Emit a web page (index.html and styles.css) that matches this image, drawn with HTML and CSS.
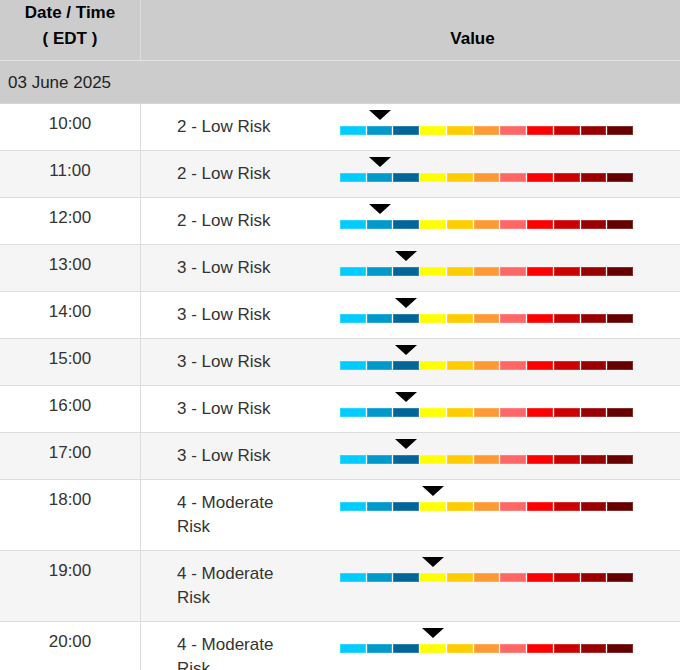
FILE: index.html
```html
<!DOCTYPE html>
<html>
<head>
<meta charset="utf-8">
<link rel="stylesheet" href="styles.css">
</head>
<body>
<div class="table">
  <div class="head">
    <div class="th th-time">Date / Time<br>( EDT )</div>
    <div class="th th-value">Value</div>
  </div>
  <div class="date-row">03 June 2025</div>

  <div class="row">
    <div class="time">10:00</div>
    <div class="value"><div class="risk">2 - Low Risk</div>
      <div class="meter"><div class="pointer" style="margin-left:29px"></div><div class="bar"><span class="s1"></span><span class="s2"></span><span class="s3"></span><span class="s4"></span><span class="s5"></span><span class="s6"></span><span class="s7"></span><span class="s8"></span><span class="s9"></span><span class="s10"></span><span class="s11"></span></div></div></div>
  </div>
  <div class="row">
    <div class="time">11:00</div>
    <div class="value"><div class="risk">2 - Low Risk</div>
      <div class="meter"><div class="pointer" style="margin-left:29px"></div><div class="bar"><span class="s1"></span><span class="s2"></span><span class="s3"></span><span class="s4"></span><span class="s5"></span><span class="s6"></span><span class="s7"></span><span class="s8"></span><span class="s9"></span><span class="s10"></span><span class="s11"></span></div></div></div>
  </div>
  <div class="row">
    <div class="time">12:00</div>
    <div class="value"><div class="risk">2 - Low Risk</div>
      <div class="meter"><div class="pointer" style="margin-left:29px"></div><div class="bar"><span class="s1"></span><span class="s2"></span><span class="s3"></span><span class="s4"></span><span class="s5"></span><span class="s6"></span><span class="s7"></span><span class="s8"></span><span class="s9"></span><span class="s10"></span><span class="s11"></span></div></div></div>
  </div>
  <div class="row">
    <div class="time">13:00</div>
    <div class="value"><div class="risk">3 - Low Risk</div>
      <div class="meter"><div class="pointer" style="margin-left:55px"></div><div class="bar"><span class="s1"></span><span class="s2"></span><span class="s3"></span><span class="s4"></span><span class="s5"></span><span class="s6"></span><span class="s7"></span><span class="s8"></span><span class="s9"></span><span class="s10"></span><span class="s11"></span></div></div></div>
  </div>
  <div class="row">
    <div class="time">14:00</div>
    <div class="value"><div class="risk">3 - Low Risk</div>
      <div class="meter"><div class="pointer" style="margin-left:55px"></div><div class="bar"><span class="s1"></span><span class="s2"></span><span class="s3"></span><span class="s4"></span><span class="s5"></span><span class="s6"></span><span class="s7"></span><span class="s8"></span><span class="s9"></span><span class="s10"></span><span class="s11"></span></div></div></div>
  </div>
  <div class="row">
    <div class="time">15:00</div>
    <div class="value"><div class="risk">3 - Low Risk</div>
      <div class="meter"><div class="pointer" style="margin-left:55px"></div><div class="bar"><span class="s1"></span><span class="s2"></span><span class="s3"></span><span class="s4"></span><span class="s5"></span><span class="s6"></span><span class="s7"></span><span class="s8"></span><span class="s9"></span><span class="s10"></span><span class="s11"></span></div></div></div>
  </div>
  <div class="row">
    <div class="time">16:00</div>
    <div class="value"><div class="risk">3 - Low Risk</div>
      <div class="meter"><div class="pointer" style="margin-left:55px"></div><div class="bar"><span class="s1"></span><span class="s2"></span><span class="s3"></span><span class="s4"></span><span class="s5"></span><span class="s6"></span><span class="s7"></span><span class="s8"></span><span class="s9"></span><span class="s10"></span><span class="s11"></span></div></div></div>
  </div>
  <div class="row">
    <div class="time">17:00</div>
    <div class="value"><div class="risk">3 - Low Risk</div>
      <div class="meter"><div class="pointer" style="margin-left:55px"></div><div class="bar"><span class="s1"></span><span class="s2"></span><span class="s3"></span><span class="s4"></span><span class="s5"></span><span class="s6"></span><span class="s7"></span><span class="s8"></span><span class="s9"></span><span class="s10"></span><span class="s11"></span></div></div></div>
  </div>
  <div class="row">
    <div class="time">18:00</div>
    <div class="value"><div class="risk">4 - Moderate Risk</div>
      <div class="meter"><div class="pointer" style="margin-left:82px"></div><div class="bar"><span class="s1"></span><span class="s2"></span><span class="s3"></span><span class="s4"></span><span class="s5"></span><span class="s6"></span><span class="s7"></span><span class="s8"></span><span class="s9"></span><span class="s10"></span><span class="s11"></span></div></div></div>
  </div>
  <div class="row">
    <div class="time">19:00</div>
    <div class="value"><div class="risk">4 - Moderate Risk</div>
      <div class="meter"><div class="pointer" style="margin-left:82px"></div><div class="bar"><span class="s1"></span><span class="s2"></span><span class="s3"></span><span class="s4"></span><span class="s5"></span><span class="s6"></span><span class="s7"></span><span class="s8"></span><span class="s9"></span><span class="s10"></span><span class="s11"></span></div></div></div>
  </div>
  <div class="row">
    <div class="time">20:00</div>
    <div class="value"><div class="risk">4 - Moderate Risk</div>
      <div class="meter"><div class="pointer" style="margin-left:82px"></div><div class="bar"><span class="s1"></span><span class="s2"></span><span class="s3"></span><span class="s4"></span><span class="s5"></span><span class="s6"></span><span class="s7"></span><span class="s8"></span><span class="s9"></span><span class="s10"></span><span class="s11"></span></div></div></div>
  </div>
</div>
</body>
</html>
```

FILE: styles.css
```css
html, body {
  margin: 0;
  padding: 0;
  background: #fff;
  overflow: hidden;
}
body {
  font-family: "Liberation Sans", Arial, sans-serif;
  font-size: 17px;
  color: #333;
}
.table {
  width: 680px;
}
.head {
  display: grid;
  grid-template-columns: 141px 1fr;
  background: #cccccc;
  border-bottom: 1px solid #e4e4e4;
  height: 60px;
}
.th {
  font-weight: bold;
  color: #000;
  line-height: 26px;
  text-align: center;
  align-self: end;
  padding-bottom: 8px;
}
.th-time {
  border-right: 1px solid #dedede;
  align-self: stretch;
  display: flex;
  flex-direction: column;
  justify-content: flex-end;
}
.th-value {
  padding-left: 124px;
}
.date-row {
  background: #cccccc;
  color: #222;
  height: 42px;
  line-height: 43px;
  padding-left: 8px;
  border-bottom: 1px solid #d6d6d6;
}
.row {
  display: grid;
  grid-template-columns: 141px 1fr;
  border-bottom: 1px solid #dddddd;
  background: #fff;
}
.row:nth-of-type(even) {
  background: #f5f5f5;
}
.time {
  border-right: 1px solid #dddddd;
  text-align: center;
  line-height: 24px;
  padding-top: 8px;
}
.value {
  display: grid;
  grid-template-columns: 120px 293px;
  column-gap: 43px;
  padding-left: 36px;
  align-items: start;
}
.risk {
  line-height: 24px;
  padding: 11px 0 11px;
}
.meter {
  padding-top: 6px;
}
.pointer {
  width: 0;
  height: 0;
  border-left: 11px solid transparent;
  border-right: 11px solid transparent;
  border-top: 10px solid #000;
  margin-bottom: 6px;
}
.bar {
  display: flex;
  gap: 1px;
  height: 9px;
}
.bar span {
  flex: 1;
  box-shadow: inset 0 0 0 1px rgba(255, 255, 255, 0.18);
}
.s1 { background: #00ccff; }
.s2 { background: #0099cc; }
.s3 { background: #006699; }
.s4 { background: #ffff00; }
.s5 { background: #ffcc00; }
.s6 { background: #ff9933; }
.s7 { background: #ff6666; }
.s8 { background: #ff0000; }
.s9 { background: #cc0000; }
.s10 { background: #990000; }
.s11 { background: #660000; }
```
